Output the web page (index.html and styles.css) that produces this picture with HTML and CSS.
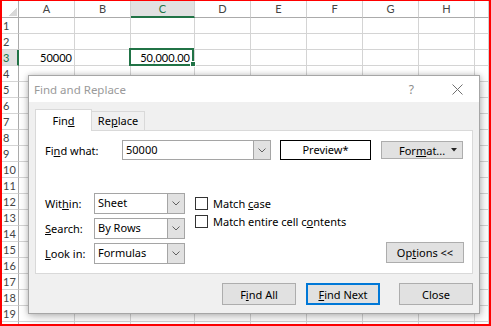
FILE: index.html
```html
<!DOCTYPE html>
<html lang="en">
  <head>
    <meta charset="UTF-8" />
    <title>Find and Replace</title>
    <link rel="stylesheet" href="styles.css">
  </head>
  <body>
    <div class="sheet">
      <span class="corner"></span><span class="ch">A</span><span class="ch">B</span><span class="ch sel-col">C</span><span class="ch">D</span><span class="ch">E</span><span class="ch">F</span><span class="ch">G</span><span class="ch">H</span><span class="ch"></span>
      <span class="rh">1</span><span></span><span></span><span></span><span></span><span></span><span></span><span></span><span></span><span></span>
      <span class="rh">2</span><span></span><span></span><span></span><span></span><span></span><span></span><span></span><span></span><span></span>
      <span class="rh sel-row">3</span><span class="num">50000</span><span></span><span class="num active-num">50,000.00</span><span></span><span></span><span></span><span></span><span></span><span></span>
      <span class="rh">4</span><span></span><span></span><span></span><span></span><span></span><span></span><span></span><span></span><span></span>
      <span class="rh">5</span><span></span><span></span><span></span><span></span><span></span><span></span><span></span><span></span><span></span>
      <span class="rh">6</span><span></span><span></span><span></span><span></span><span></span><span></span><span></span><span></span><span></span>
      <span class="rh">7</span><span></span><span></span><span></span><span></span><span></span><span></span><span></span><span></span><span></span>
      <span class="rh">8</span><span></span><span></span><span></span><span></span><span></span><span></span><span></span><span></span><span></span>
      <span class="rh">9</span><span></span><span></span><span></span><span></span><span></span><span></span><span></span><span></span><span></span>
      <span class="rh">10</span><span></span><span></span><span></span><span></span><span></span><span></span><span></span><span></span><span></span>
      <span class="rh">11</span><span></span><span></span><span></span><span></span><span></span><span></span><span></span><span></span><span></span>
      <span class="rh">12</span><span></span><span></span><span></span><span></span><span></span><span></span><span></span><span></span><span></span>
      <span class="rh">13</span><span></span><span></span><span></span><span></span><span></span><span></span><span></span><span></span><span></span>
      <span class="rh">14</span><span></span><span></span><span></span><span></span><span></span><span></span><span></span><span></span><span></span>
      <span class="rh">15</span><span></span><span></span><span></span><span></span><span></span><span></span><span></span><span></span><span></span>
      <span class="rh">16</span><span></span><span></span><span></span><span></span><span></span><span></span><span></span><span></span><span></span>
      <span class="rh">17</span><span></span><span></span><span></span><span></span><span></span><span></span><span></span><span></span><span></span>
      <span class="rh">18</span><span></span><span></span><span></span><span></span><span></span><span></span><span></span><span></span><span></span>
      <span class="rh">19</span><span></span><span></span><span></span><span></span><span></span><span></span><span></span><span></span><span></span>
      <span class="rh last"></span><span class="last"></span><span class="last"></span><span class="last"></span><span class="last"></span><span class="last"></span><span class="last"></span><span class="last"></span><span class="last"></span><span class="last"></span>
    </div>

    <!-- active cell C3 -->
    <div class="selection"><span class="handle"></span></div>

    <div class="dialog">
      <div class="titlebar">
        <span class="title">Find and Replace</span>
        <span class="help">?</span>
        <svg class="close" width="11" height="11" viewBox="0 0 11 11">
          <path d="M0.5 0.5 L10.5 10.5 M10.5 0.5 L0.5 10.5" stroke="#707070" stroke-width="1" fill="none" />
        </svg>
      </div>

      <div class="dialog-body">
        <div class="tabs">
          <div class="tab active"><span>Fin<u>d</u></span></div>
          <div class="tab"><span>Re<u>p</u>lace</span></div>
        </div>

        <div class="panel">
          <div class="find-row">
            <span class="find-label">Fi<u>n</u>d what:</span>
            <div class="combo find-combo">
              <span class="combo-text">50000</span>
              <span class="combo-btn">
                <svg width="8" height="5" viewBox="0 0 8 5"><path d="M0.5 0.5 L4 4 L7.5 0.5" stroke="#606060" fill="none" /></svg>
              </span>
            </div>
            <div class="preview">Preview*</div>
            <div class="btn format-btn">
              <span>For<u>m</u>at...</span>
              <svg width="6" height="4" viewBox="0 0 6 4"><path d="M0 0 H6 L3 3.5 Z" fill="#222" /></svg>
            </div>
          </div>

          <div class="options">
            <div class="fields">
              <span class="field-label">Wit<u>h</u>in:</span>
              <div class="combo">
                <span class="combo-text">Sheet</span>
                <span class="combo-btn">
                  <svg width="8" height="5" viewBox="0 0 8 5"><path d="M0.5 0.5 L4 4 L7.5 0.5" stroke="#606060" fill="none" /></svg>
                </span>
              </div>
              <span class="field-label"><u>S</u>earch:</span>
              <div class="combo">
                <span class="combo-text">By Rows</span>
                <span class="combo-btn">
                  <svg width="8" height="5" viewBox="0 0 8 5"><path d="M0.5 0.5 L4 4 L7.5 0.5" stroke="#606060" fill="none" /></svg>
                </span>
              </div>
              <span class="field-label"><u>L</u>ook in:</span>
              <div class="combo">
                <span class="combo-text">Formulas</span>
                <span class="combo-btn">
                  <svg width="8" height="5" viewBox="0 0 8 5"><path d="M0.5 0.5 L4 4 L7.5 0.5" stroke="#606060" fill="none" /></svg>
                </span>
              </div>
            </div>

            <div class="checks">
              <div class="check"><span class="box"></span><span>Match <u>c</u>ase</span></div>
              <div class="check"><span class="box"></span><span>Match entire cell c<u>o</u>ntents</span></div>
            </div>

            <div class="btn options-btn"><span>Op<u>t</u>ions &lt;&lt;</span></div>
          </div>
        </div>

        <div class="actions">
          <div class="btn"><span>F<u>i</u>nd All</span></div>
          <div class="btn default"><span><u>F</u>ind Next</span></div>
          <div class="btn close-btn"><span>Close</span></div>
        </div>
      </div>
    </div>
  </body>
</html>
```

FILE: styles.css
```css
* {
  box-sizing: border-box;
}

body {
  margin: 0;
  width: 491px;
  height: 326px;
  overflow: hidden;
  background-color: #fff;
  font-family: "Noto Sans", "Open Sans", sans-serif;
}

u {
  text-decoration: underline;
  text-underline-offset: 1px;
}

/* spreadsheet */

.sheet {
  display: grid;
  grid-template-columns: 17px 56px 56px 64px repeat(5, 56px) 1fr;
  grid-template-rows: 17px repeat(19, 16px) 1fr;
  width: 491px;
  height: 326px;
  border: 2px solid #ff0000;
  border-top-width: 1px;
  font-family: Lato, "Liberation Sans", sans-serif;
  font-size: 11px;
  color: #000;
}

.sheet span {
  border-right: 1px solid #d4d4d4;
  border-bottom: 1px solid #d4d4d4;
  line-height: 15px;
  white-space: nowrap;
  overflow: hidden;
}

.sheet .ch {
  text-align: center;
  line-height: 16px;
  color: #444;
  border-right-color: #d0d0d0;
  border-bottom-color: #ababab;
}

.sheet .rh {
  padding-left: 1px;
  color: #444;
  border-right-color: #ababab;
}

.sheet .last {
  border-bottom: none;
}

.sheet .corner {
  border-right-color: #ababab;
  border-bottom-color: #ababab;
  background: linear-gradient(to bottom right, transparent 50%, #d9d9d9 50%) no-repeat right 1px bottom 1px / 9px 8px;
}

.sheet .num {
  text-align: right;
  padding-right: 2px;
}

.sheet .active-num {
  padding-right: 4px;
}

.sheet .sel-col {
  background-color: #e1e1e1;
  color: #217346;
  border-bottom: 2px solid #217346;
}

.sheet .sel-row {
  background-color: #e1e1e1;
  color: #217346;
  border-right: 2px solid #217346;
}

.selection {
  position: absolute;
  left: 129px;
  top: 48px;
  width: 65px;
  height: 18px;
  border: 2px solid #217346;
}

.handle {
  position: absolute;
  right: -4px;
  bottom: -3px;
  width: 6px;
  height: 6px;
  background-color: #217346;
  border: 1px solid #fff;
}

/* dialog */

.dialog {
  position: absolute;
  left: 28px;
  top: 75px;
  width: 452px;
  height: 239px;
  border: 1px solid #a6a6a6;
  background-color: #f0f0f0;
  box-shadow: 0 0 5px rgba(0, 0, 0, 0.18), 1px 3px 10px rgba(0, 0, 0, 0.22);
  font-size: 11px;
  color: #000;
}

.titlebar {
  display: flex;
  align-items: center;
  height: 26px;
  padding-left: 5px;
  background-color: #fff;
}

.title {
  flex-grow: 1;
  font-size: 11.5px;
  color: #9a9a9a;
}

.help {
  margin-right: 38px;
  font-size: 12px;
  color: #8c8c8c;
}

.close {
  margin-right: 16px;
}

.dialog-body {
  padding: 7px 6px 8px 6px;
}

.tabs {
  display: flex;
  align-items: flex-end;
  height: 21px;
}

.tab {
  height: 19px;
  width: 53px;
  line-height: 18px;
  text-align: center;
  border: 1px solid #d9d9d9;
  border-left: none;
  border-bottom: none;
  background-color: #f0f0f0;
}

.tab.active {
  position: relative;
  z-index: 1;
  width: 57px;
  height: 22px;
  margin-bottom: -1px;
  line-height: 21px;
  border-left: 1px solid #d9d9d9;
  background-color: #fff;
}

.panel {
  height: 144px;
  padding: 9px 8px 8px 9px;
  background-color: #fff;
  border: 1px solid #d9d9d9;
}

.find-row {
  display: flex;
  align-items: center;
  height: 20px;
}

.find-label {
  width: 77px;
}

.combo {
  display: flex;
  height: 21px;
  background-color: #fff;
  border: 1px solid #a5a5a5;
}

.find-combo {
  width: 149px;
  height: 20px;
}

.combo-text {
  flex-grow: 1;
  padding-left: 3px;
  line-height: 18px;
}

.combo-btn {
  display: flex;
  align-items: center;
  justify-content: center;
  width: 17px;
  background-color: #e1e1e1;
  border-left: 1px solid #a5a5a5;
}

.preview {
  width: 91px;
  height: 20px;
  margin-left: 9px;
  line-height: 18px;
  text-align: center;
  background-color: #fff;
  border: 1px solid #000;
}

.btn {
  display: flex;
  align-items: center;
  justify-content: center;
  width: 74px;
  height: 22px;
  background-color: #e1e1e1;
  border: 1px solid #adadad;
}

.format-btn {
  width: 82px;
  height: 18px;
  margin-left: 10px;
  justify-content: space-between;
  padding: 0 5px 0 17px;
}

.options {
  display: flex;
  margin-top: 33px;
}

.fields {
  display: grid;
  grid-template-columns: 49px 91px;
  grid-template-rows: repeat(3, 21px);
  row-gap: 4px;
  align-items: center;
}

.fields .combo {
  width: 91px;
}

.checks {
  margin-left: 10px;
  margin-top: 1px;
}

.check {
  display: flex;
  align-items: center;
  height: 18px;
}

.box {
  width: 13px;
  height: 13px;
  margin-right: 5px;
  background-color: #fff;
  border: 1px solid #333;
}

.options-btn {
  width: 78px;
  height: 21px;
  margin-left: auto;
  margin-bottom: 1px;
  align-self: flex-end;
}

.actions {
  display: flex;
  justify-content: flex-end;
  margin-top: 9px;
}

.actions .btn + .btn {
  margin-left: 10px;
}

.actions .default {
  border: 2px solid #0078d7;
}

.actions .close-btn {
  margin-left: 19px !important;
}
```
